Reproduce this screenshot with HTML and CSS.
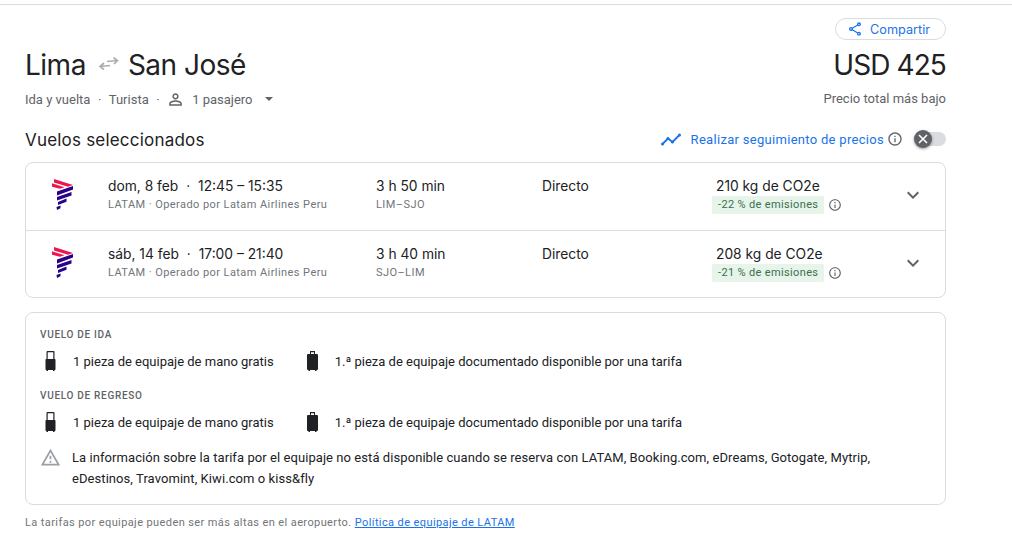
FILE: index.html
```html
<!DOCTYPE html>
<html lang="es">
<head>
  <meta charset="utf-8">
  <title>Lima - San José</title>
  <link rel="stylesheet" href="styles.css">
</head>
<body>
  <svg class="sprite" width="0" height="0">
    <defs>
      <symbol id="i-info" viewBox="0 0 24 24"><path d="M11 7h2v2h-2zm0 4h2v6h-2zm1-9C6.480 2 2 6.480 2 12s4.480 10 10 10 10-4.480 10-10S17.520 2 12 2zm0 18c-4.410 0-8-3.590-8-8s3.590-8 8-8 8 3.590 8 8-3.590 8-8 8z"/></symbol>
      <symbol id="i-chevron" viewBox="0 0 24 24"><path d="M7.410 8.590 12 13.170l4.590-4.580L18 10l-6 6-6-6z"/></symbol>
      <symbol id="i-carry" viewBox="-0.5 0 11 20"><path fill-rule="evenodd" d="M2 0h6a1 1 0 0 1 1 1v7h.2a.8.8 0 0 1 .8.8v9.400a.8.8 0 0 1-.8.8H9v1H7.500v-1h-5v1H1v-1H.8a.8.8 0 0 1-.8-.8V8.800a.8.8 0 0 1 .8-.8H1V1a1 1 0 0 1 1-1zM2.200 1.200V8h5.600V1.200z"/></symbol>
      <symbol id="i-bag" viewBox="0 0 11 20"><path fill-rule="evenodd" d="M3 0h5v3h2a1 1 0 0 1 1 1v14a1 1 0 0 1-1 1h-.5v1H8v-1H3v1H1.500v-1H1a1 1 0 0 1-1-1V4a1 1 0 0 1 1-1h2zM4 1.200V3h3V1.200z"/></symbol>
      <symbol id="i-latam" viewBox="0 0 21 31">
        <path fill="#ed1650" d="M2 0 21 6l-5 1.700L2 3.400zM0 4.300l12.500 4-4.500 1.500L0 7.800z"/>
        <path fill="#2a0088" d="M21 7v3.500L5 16.500v-4zM19.500 13v3.500L5 21.500v-3.500zM14.500 19.500v3.200L6 26v-3zM8.500 26.500v2.700L5 31l-.5-3z"/>
      </symbol>
    </defs>
  </svg>

  <main class="page">
    <div class="share-row">
      <button class="share">
        <svg class="share-icon" viewBox="0 0 24 24"><path d="M18 16.080c-.76 0-1.440.3-1.960.77L8.910 12.700c.05-.23.09-.46.09-.7s-.04-.47-.09-.7l7.050-4.110c.54.5 1.250.81 2.040.81 1.660 0 3-1.340 3-3s-1.340-3-3-3-3 1.340-3 3c0 .24.04.47.09.7L8.040 9.810C7.500 9.310 6.790 9 6 9c-1.660 0-3 1.340-3 3s1.340 3 3 3c.79 0 1.500-.31 2.040-.81l7.120 4.160c-.05.21-.08.43-.08.65 0 1.610 1.310 2.920 2.920 2.920s2.920-1.310 2.920-2.920-1.310-2.920-2.920-2.920zM18 4c.55 0 1 .45 1 1s-.45 1-1 1-1-.45-1-1 .45-1 1-1zM6 13c-.55 0-1-.45-1-1s.45-1 1-1 1 .45 1 1-.45 1-1 1zm12 7.020c-.55 0-1-.45-1-1s.45-1 1-1 1 .45 1 1-.45 1-1 1z"/></svg>
        Compartir
      </button>
    </div>

    <div class="summary">
      <div>
        <h1 class="route">
          Lima
          <svg class="swap" viewBox="0 0 20 16"><path d="M8 4.500 18.500 3.500M14.500 .5 18.500 3.500 15 7M11 8.500 1 9.500M5 6 1 9.500 5 12.500" fill="none" stroke="#a9adb2" stroke-width="1.700"/></svg>
          San José
        </h1>
        <div class="trip-meta">
          <span>Ida y vuelta</span><span class="dot">·</span><span>Turista</span><span class="dot">·</span>
          <svg class="person" viewBox="0 0 24 24"><path d="M12 5.900c1.160 0 2.100.94 2.100 2.100s-.94 2.100-2.100 2.100S9.900 9.160 9.900 8s.94-2.100 2.100-2.100m0 9c2.970 0 6.100 1.460 6.100 2.100v1.100H5.900V17c0-.64 3.130-2.100 6.100-2.100M12 4C9.790 4 8 5.790 8 8s1.790 4 4 4 4-1.790 4-4-1.790-4-4-4zm0 9c-2.670 0-8 1.340-8 4v3h16v-3c0-2.660-5.330-4-8-4z"/></svg>
          <span class="passengers">1 pasajero</span>
          <span class="caret"></span>
        </div>
      </div>
      <div class="price-box">
        <div class="price">USD 425</div>
        <div class="price-note">Precio total más bajo</div>
      </div>
    </div>

    <div class="selected-head">
      <h2>Vuelos seleccionados</h2>
      <div class="tracking">
        <svg class="chart" viewBox="0 0 20 13"><polyline points="1.500,11 7,5.500 11.500,9 18.500,2" fill="none" stroke="#1a73e8" stroke-width="1.800"/><circle cx="1.500" cy="11" r="1.500" fill="#1a73e8"/><circle cx="7" cy="5.500" r="1.500" fill="#1a73e8"/><circle cx="11.500" cy="9" r="1.500" fill="#1a73e8"/><circle cx="18.500" cy="2" r="1.500" fill="#1a73e8"/></svg>
        <span>Realizar seguimiento de precios</span>
        <svg class="info info-track"><use href="#i-info"/></svg>
        <div class="toggle">
          <div class="toggle-thumb">
            <svg viewBox="0 0 12 12"><path d="M2 2l8 8M10 2l-8 8" stroke="#fff" stroke-width="1.600"/></svg>
          </div>
        </div>
      </div>
    </div>

    <section class="card flights">
      <div class="flight">
        <svg class="logo"><use href="#i-latam"/></svg>
        <div>
          <div class="main-line">dom, 8 feb <span class="sep">·</span> 12:45 – 15:35</div>
          <div class="sub-line">LATAM · Operado por Latam Airlines Peru</div>
        </div>
        <div>
          <div class="main-line">3 h 50 min</div>
          <div class="sub-line">LIM–SJO</div>
        </div>
        <div class="main-line">Directo</div>
        <div>
          <div class="main-line">210 kg de CO2e</div>
          <div class="emissions"><span class="badge">-22 % de emisiones</span><svg class="info"><use href="#i-info"/></svg></div>
        </div>
        <svg class="chevron"><use href="#i-chevron"/></svg>
      </div>
      <div class="flight">
        <svg class="logo"><use href="#i-latam"/></svg>
        <div>
          <div class="main-line">sáb, 14 feb <span class="sep">·</span> 17:00 – 21:40</div>
          <div class="sub-line">LATAM · Operado por Latam Airlines Peru</div>
        </div>
        <div>
          <div class="main-line">3 h 40 min</div>
          <div class="sub-line">SJO–LIM</div>
        </div>
        <div class="main-line">Directo</div>
        <div>
          <div class="main-line">208 kg de CO2e</div>
          <div class="emissions"><span class="badge">-21 % de emisiones</span><svg class="info"><use href="#i-info"/></svg></div>
        </div>
        <svg class="chevron"><use href="#i-chevron"/></svg>
      </div>
    </section>

    <section class="card baggage">
      <h3>Vuelo de ida</h3>
      <div class="bag-row">
        <svg class="bag-icon"><use href="#i-carry"/></svg>
        <span class="bag-text">1 pieza de equipaje de mano gratis</span>
        <svg class="bag-icon"><use href="#i-bag"/></svg>
        <span class="bag-text">1.ª pieza de equipaje documentado disponible por una tarifa</span>
      </div>
      <h3>Vuelo de regreso</h3>
      <div class="bag-row">
        <svg class="bag-icon"><use href="#i-carry"/></svg>
        <span class="bag-text">1 pieza de equipaje de mano gratis</span>
        <svg class="bag-icon"><use href="#i-bag"/></svg>
        <span class="bag-text">1.ª pieza de equipaje documentado disponible por una tarifa</span>
      </div>
      <div class="warning">
        <svg class="warning-icon" viewBox="0 0 24 24"><path d="M12 5.990 19.530 19H4.470L12 5.990M12 2 1 21h22L12 2zm1 14h-2v2h2v-2zm0-6h-2v4h2v-4z"/></svg>
        <p>La información sobre la tarifa por el equipaje no está disponible cuando se reserva con LATAM, Booking.com, eDreams, Gotogate, Mytrip, eDestinos, Travomint, Kiwi.com o kiss&amp;fly</p>
      </div>
    </section>

    <p class="footnote">La tarifas por equipaje pueden ser más altas en el aeropuerto. <a href="#">Política de equipaje de LATAM</a></p>
  </main>
</body>
</html>
```

FILE: styles.css
```css
:root {
  --text: #202124;
  --text-light: #5f6368;
  --text-lighter: #70757a;
  --blue: #1a73e8;
  --line: #dadce0;
}

body {
  margin: 0;
  font-family: Roboto, "Liberation Sans", sans-serif;
  color: var(--text);
  background: white;
}

.sprite {
  position: absolute;
}

.page {
  margin-top: 4px;
  border-top: 1px solid var(--line);
  padding: 13px 66px 0 25px;
}

/* Header */
.share-row {
  display: flex;
  justify-content: flex-end;
}

.share {
  display: flex;
  align-items: center;
  gap: 7px;
  height: 22px;
  width: 111px;
  box-sizing: border-box;
  padding: 0 0 0 11px;
  border: 1px solid var(--line);
  border-radius: 11px;
  background: white;
  color: var(--blue);
  font-family: Inter, Roboto, sans-serif;
  font-size: 12.700px;
}

.share-icon {
  width: 16px;
  height: 16px;
  fill: var(--blue);
}

.summary {
  display: flex;
  justify-content: space-between;
  margin-top: 6px;
}

.route {
  display: flex;
  align-items: center;
  gap: 10px;
  margin: 0;
  height: 38px;
  font-family: Inter, Roboto, sans-serif;
  font-size: 28px;
  font-weight: 400;
  letter-spacing: -0.5px;
}

.swap {
  width: 20px;
  height: 16px;
  margin: 0 -1px 0 3px;
}

.trip-meta {
  display: flex;
  align-items: center;
  margin-top: 6px;
  height: 18px;
  font-size: 13px;
  color: var(--text-light);
}

.dot {
  margin: 0 7.500px;
}

.person {
  width: 19px;
  height: 19px;
  margin: 0 7px 0 -1px;
  fill: var(--text-light);
}

.caret {
  margin-left: 12px;
  border: 4px solid transparent;
  border-top: 4px solid var(--text-light);
  border-bottom: 0;
}

.price-box {
  text-align: right;
}

.price {
  height: 38px;
  line-height: 38px;
  font-family: Inter, Roboto, sans-serif;
  font-size: 28px;
  letter-spacing: -0.9px;
}

.price-note {
  margin-top: 6px;
  line-height: 18px;
  font-size: 13px;
  color: var(--text-light);
}

.selected-head {
  display: flex;
  justify-content: space-between;
  align-items: center;
  margin-top: 19px;
  height: 24px;
}

.selected-head h2 {
  margin: 2px 0 0;
  font-family: Inter, Roboto, sans-serif;
  font-size: 17px;
  font-weight: 400;
  letter-spacing: 0.2px;
}

.tracking {
  display: flex;
  align-items: center;
  font-size: 13px;
  letter-spacing: 0.3px;
  color: var(--blue);
}

.chart {
  width: 20px;
  height: 13px;
  margin-right: 10px;
}

.info {
  width: 14px;
  height: 14px;
  fill: var(--text-light);
}

.info-track {
  width: 16px;
  height: 16px;
  margin: 0 12px 0 3px;
}

.toggle {
  position: relative;
  width: 31px;
  height: 14px;
  border-radius: 7px;
  background: var(--line);
}

.toggle-thumb {
  position: absolute;
  left: -1px;
  top: -2px;
  width: 18px;
  height: 18px;
  border-radius: 50%;
  background: #5f6368;
  box-shadow: 0 1px 3px rgba(0,0,0,0.4);
  display: flex;
  align-items: center;
  justify-content: center;
}

.toggle-thumb svg {
  width: 12px;
  height: 12px;
}

/* Cards */
.card {
  border: 1px solid var(--line);
  border-radius: 8px;
}

.flights {
  margin-top: 11px;
}

.flight {
  display: grid;
  grid-template-columns: 82px 268px 166px 174px 185px 24px;
  align-items: start;
  height: 67px;
  box-sizing: border-box;
  padding-top: 13px;
}

.flight + .flight {
  border-top: 1px solid var(--line);
}

.logo {
  width: 21px;
  height: 31px;
  margin: 3px 0 0 26px;
}

.main-line {
  line-height: 20px;
  font-family: Inter, Roboto, sans-serif;
  font-size: 13.800px;
}

.sep {
  margin: 0 4px;
}

.sub-line {
  margin-top: 1px;
  line-height: 16px;
  font-size: 11px;
  letter-spacing: 0.43px;
  color: var(--text-lighter);
}

.emissions {
  display: flex;
  align-items: center;
  margin-left: -4px;
}

.badge {
  padding: 0 6px;
  height: 18px;
  line-height: 18px;
  border-radius: 2px;
  background: #e6f4ea;
  color: #3c6e50;
  font-size: 11px;
  letter-spacing: 0.35px;
}

.emissions .info {
  width: 14px;
  height: 14px;
  margin-left: 4px;
}

.chevron {
  width: 24px;
  height: 24px;
  margin-top: 7px;
  fill: var(--text-light);
}

/* Baggage */
.baggage {
  margin-top: 14px;
  padding: 14px 14px 15px;
  font-size: 13px;
}

.baggage h3 {
  margin: 0;
  line-height: 16px;
  font-size: 10px;
  font-weight: 500;
  letter-spacing: 0.7px;
  text-transform: uppercase;
  color: var(--text-light);
}

.bag-row {
  display: flex;
  align-items: center;
  height: 24px;
  margin: 6px 0 15px;
}

.bag-icon {
  width: 11px;
  height: 20px;
  margin-left: 5px;
  fill: var(--text);
}

.bag-text {
  margin-left: 17px;
  margin-right: 28px;
}

.warning {
  display: flex;
  gap: 11px;
  margin-top: -2px;
}

.warning-icon {
  flex: none;
  width: 21px;
  height: 21px;
  fill: #9aa0a6;
}

.warning p {
  margin: 0;
  max-width: 830px;
  line-height: 21px;
  letter-spacing: 0.07px;
}

.footnote {
  margin: 11px 0 0;
  font-size: 11px;
  letter-spacing: 0.4px;
  color: var(--text-lighter);
}

.footnote a {
  color: var(--blue);
}
```
